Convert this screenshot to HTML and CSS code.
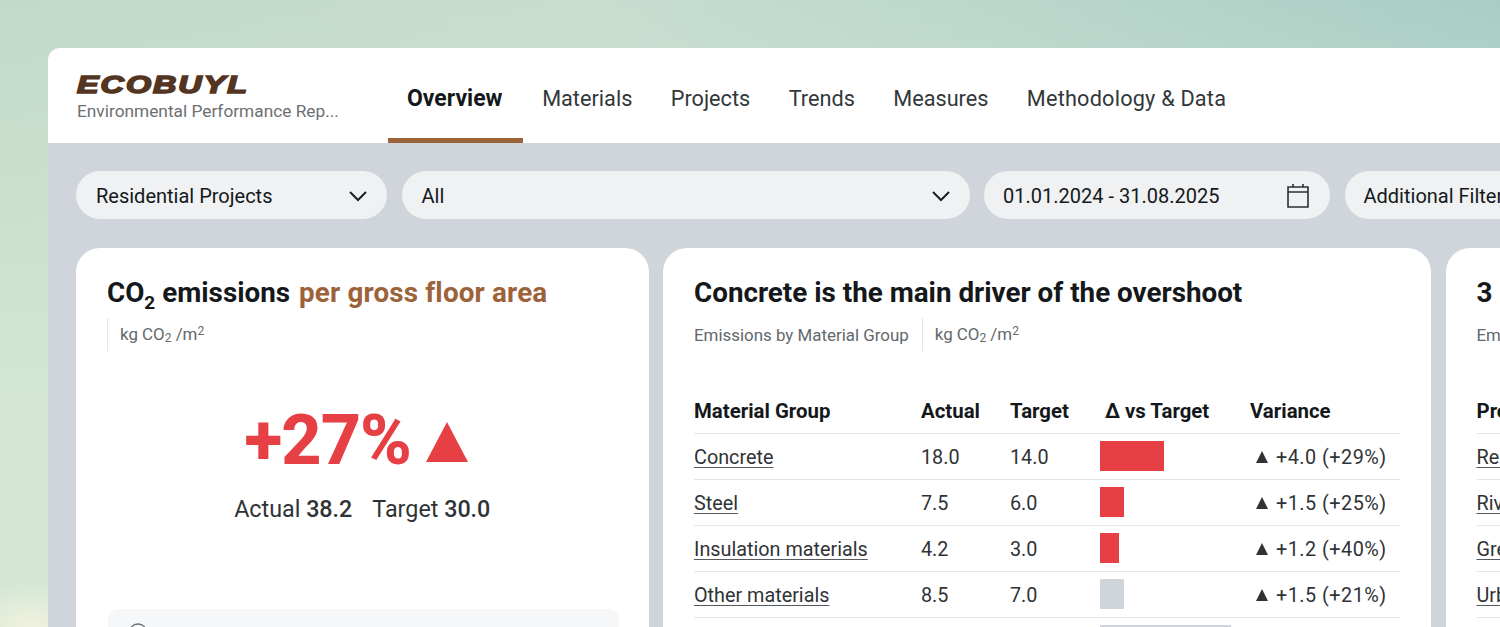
FILE: index.html
```html
<!DOCTYPE html>
<html lang="en">
<head>
<meta charset="utf-8">
<title>Ecobuyl</title>
<link rel="stylesheet" href="styles.css">
</head>
<body>
<div class="app">
  <header class="top">
    <div class="brand">
      <div class="logo">ECOBUYL</div>
      <div class="tagline">Environmental Performance Rep...</div>
    </div>
    <nav class="nav">
      <a class="tab active">Overview</a>
      <a class="tab">Materials</a>
      <a class="tab">Projects</a>
      <a class="tab">Trends</a>
      <a class="tab">Measures</a>
      <a class="tab last">Methodology &amp; Data</a>
    </nav>
  </header>
  <main class="main">
    <div class="filters">
      <div class="pill f1"><span>Residential Projects</span><svg class="chev" viewBox="0 0 20 12"><path d="M2 2l8 8 8-8"/></svg></div>
      <div class="pill f2"><span>All</span><svg class="chev" viewBox="0 0 20 12"><path d="M2 2l8 8 8-8"/></svg></div>
      <div class="pill f3"><span>01.01.2024 - 31.08.2025</span><svg class="cal" viewBox="0 0 24 26"><path d="M2 4h20v20H2zM2 9h20M7 1v3M17 1v3"/></svg></div>
      <div class="pill f4"><span>Additional Filters</span></div>
    </div>
    <div class="cards">
      <section class="card c1">
        <h2>CO<sub>2</sub> emissions <em>per gross floor area</em></h2>
        <div class="meta"><span class="unit">kg CO<sub>2</sub> /m<sup>2</sup></span></div>
        <div class="kpi">+27%<svg class="up" viewBox="0 0 42 40"><path d="M21 0l21 40H0z"/></svg></div>
        <div class="vals">Actual <b>38.2</b><span class="sp"></span>Target <b>30.0</b></div>
        <div class="note"><svg class="info" viewBox="0 0 20 20"><circle cx="10" cy="10" r="9"/></svg></div>
      </section>
      <section class="card c2">
        <h2>Concrete is the main driver of the overshoot</h2>
        <div class="meta"><span class="src">Emissions by Material Group</span><span class="unit">kg CO<sub>2</sub> /m<sup>2</sup></span></div>
        <table class="tbl">
          <thead><tr><th class="w1">Material Group</th><th class="w2">Actual</th><th class="w3">Target</th><th class="w4"><span class="dh">Δ vs Target</span></th><th>Variance</th></tr></thead>
          <tbody>
            <tr><td><a>Concrete</a></td><td>18.0</td><td>14.0</td><td><i class="bar red" style="width:64px"></i></td><td><span class="var"><i class="tri"></i>+4.0 (+29%)</span></td></tr>
            <tr><td><a>Steel</a></td><td>7.5</td><td>6.0</td><td><i class="bar red" style="width:24px"></i></td><td><span class="var"><i class="tri"></i>+1.5 (+25%)</span></td></tr>
            <tr><td><a>Insulation materials</a></td><td>4.2</td><td>3.0</td><td><i class="bar red" style="width:19px"></i></td><td><span class="var"><i class="tri"></i>+1.2 (+40%)</span></td></tr>
            <tr><td><a>Other materials</a></td><td>8.5</td><td>7.0</td><td><i class="bar grey" style="width:24px"></i></td><td><span class="var"><i class="tri"></i>+1.5 (+21%)</span></td></tr>
            <tr><td><b>Total</b></td><td>38.2</td><td>30.0</td><td><i class="bar grey" style="width:131px"></i></td><td><span class="var"><i class="tri"></i>+8.2 (+27%)</span></td></tr>
          </tbody>
        </table>
      </section>
      <section class="card c3">
        <h2>3 projects</h2>
        <div class="meta"><span class="src">Emissions</span></div>
        <table class="tbl t3">
          <thead><tr><th>Project</th></tr></thead>
          <tbody>
            <tr><td><a>Residential</a></td></tr>
            <tr><td><a>Riverside</a></td></tr>
            <tr><td><a>Green Park</a></td></tr>
            <tr><td><a>Urban Living</a></td></tr>
          </tbody>
        </table>
      </section>
    </div>
  </main>
</div>
</body>
</html>
```
FILE: styles.css
```css
* { box-sizing: border-box; }
html, body { margin: 0; height: 627px; overflow: hidden; }
body {
  padding: 48px 0 0 48px;
  background:
    radial-gradient(ellipse 70px 45px at 30px 627px, #f1f2dd, rgba(241, 242, 221, 0)),
    linear-gradient(to bottom, rgba(212, 231, 214, 0) 0, #d4e7d6 420px),
    linear-gradient(to right, #c1dac9 0%, #c7ddd0 40%, #b9d6cb 70%, #a9cdc5 100%);
  font-family: Roboto, "Liberation Sans", sans-serif;
  color: #15181b;
}
.app { width: 1600px; height: 800px; border-radius: 12px 0 0 0; overflow: hidden; background: #cfd5da; }
.top { height: 95px; background: #fff; display: flex; padding-left: 29px; }
.brand { width: 310.5px; padding-top: 25px; }
.logo {
  font: italic 700 24px/24px "Liberation Sans", sans-serif;
  color: #533522; -webkit-text-stroke: 1.6px #533522;
  letter-spacing: 1.5px; transform: scaleX(1.345); transform-origin: left center;
}
.tagline { margin-top: 4px; font-size: 17.3px; line-height: 20px; color: #6d6f71; }
.nav { display: flex; }
.tab { height: 95px; padding: 0 19.2px; font-size: 21.7px; line-height: 102px; color: #33373a; border-bottom: 5px solid transparent; }
.tab.active { padding: 0 20.5px 0 19.5px; font-size: 23px; font-weight: 700; color: #15181b; border-bottom-color: #9c6239; }
.tab.last { letter-spacing: 0.2px; }
.main { padding: 28px; }
.filters { display: flex; gap: 14.5px; height: 48px; }
.pill { height: 48px; border-radius: 24px; background: #eff1f2; padding: 2px 19px 0 20px; display: flex; align-items: center; justify-content: space-between; font-size: 20px; flex: none; }
.f1 { width: 311px; }
.f2 { width: 568px; }
.f3 { width: 346px; padding-left: 19px; padding-right: 20px; }
.f4 { width: 300px; padding-left: 19px; }
.chev { width: 20px; height: 12px; fill: none; stroke: #1d2023; stroke-width: 2; }
.cal { width: 24px; height: 26px; fill: none; stroke: #2b2f32; stroke-width: 1.6; }
.cards { display: flex; gap: 14.5px; margin-top: 29px; }
.card { background: #fff; border-radius: 24px; padding: 28px 31px; height: 500px; flex: none; }
.c1 { width: 572.5px; }
.c2 { width: 768px; }
.c3 { width: 500px; }
h2 { margin: 0; font-size: 27.8px; line-height: 34px; font-weight: 700; color: #15181b; }
h2 em { font-style: normal; color: #9c6239; margin-left: 2px; letter-spacing: 0.17px; }
h2 sub { font-size: 19px; line-height: 0; }
.meta { display: flex; margin-top: 8px; height: 33px; align-items: center; font-size: 16.9px; color: #62686c; }
.meta sub, .meta sup { font-size: 12px; line-height: 0; }
.meta sub { vertical-align: -2px; }
.meta sup { vertical-align: 5px; }
.unit { border-left: 1px solid #e3e6e8; padding-left: 12px; height: 33px; line-height: 33px; }
.src { padding-right: 13px; }
.kpi { display: flex; justify-content: center; align-items: flex-end; gap: 15px; padding-right: 12px; margin-top: 53px; height: 72px; font-size: 70px; line-height: 72px; font-weight: 800; color: #e64044; letter-spacing: -1px; }
.up { width: 42px; height: 40px; margin-bottom: 14px; fill: #e64044; }
.vals { text-align: center; margin-top: 18px; font-size: 23.3px; line-height: 30px; color: #2f3336; }
.vals b { font-weight: 500; }
.sp { display: inline-block; width: 20px; }
.note { margin: 85px -1px 0 1px; height: 80px; border-radius: 10px; background: #f5f7f8; padding: 14px 20px; }
.info { width: 20px; height: 20px; fill: none; stroke: #6a6f73; stroke-width: 1.3; }
.tbl { border-collapse: collapse; table-layout: fixed; width: 706px; margin-top: 38px; font-size: 19.8px; color: #2f3336; }
.tbl th { text-align: left; font-size: 20.4px; font-weight: 700; color: #15181b; height: 44px; padding: 0; border-bottom: 1px solid #e3e6e8; }
.tbl td { height: 46px; padding: 2px 0 0; border-bottom: 1px solid #e3e6e8; }
.tbl a { text-decoration: underline; text-decoration-thickness: 1px; text-decoration-color: #555a5e; text-underline-offset: 3px; }
.w1 { width: 227px; }
.w2 { width: 89px; }
.w3 { width: 90px; }
.w4 { width: 150px; }
.dh { padding-left: 5px; }
.bar { display: block; height: 30px; margin-top: -2px; }
.red { background: #e64044; }
.grey { background: #cfd5da; }
.var { display: flex; align-items: center; padding-left: 6px; white-space: nowrap; letter-spacing: 0.5px; }
.tri { width: 0; height: 0; border: 6px solid transparent; border-top: 0; border-bottom: 12px solid #2f3336; margin-right: 8px; }
.t3 { width: 400px; }
```
